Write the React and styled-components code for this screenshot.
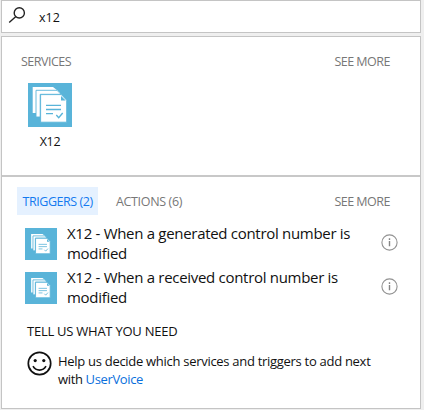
import React from "react";
import styled, { createGlobalStyle } from "styled-components";

const Global = createGlobalStyle`
  * { box-sizing: border-box; }
  body { margin: 0; background: #efefef; overflow: hidden; font-family: "Open Sans", "Noto Sans", sans-serif; color: #111; }
`;

const Picker = styled.main`
  display: flex;
  flex-direction: column;
  gap: 3px;
  width: 420px;
  height: 409px;
  margin-left: 1px;
`;

const SearchBar = styled.div`
  display: flex;
  align-items: flex-start;
  height: 33px;
  padding: 5px 0 0 6px;
  border: 1px solid #c4c4c4;
  background: #fff;
`;

const Label = styled.span`
  display: block;
  white-space: nowrap;
  font-size: ${(p) => p.$size || 12.5}px;
  line-height: ${(p) => p.$line || 18}px;
  letter-spacing: ${(p) => p.$track || 0}px;
  color: ${(p) => p.$color || "#111"};
`;

const Query = styled(Label)`
  margin: 3px 0 0 13px;
`;

const Panel = styled.div`
  height: 373px;
  border: 1px solid #c4c4c4;
  background: #fff;
`;

const Services = styled.section`
  height: 140px;
  border-bottom: 2px solid #c8c8c8;
  padding: 16px 30px 0 19px;
`;

const HeaderRow = styled.header`
  display: flex;
  justify-content: space-between;
  align-items: center;
`;

const ServiceTile = styled.div`
  display: flex;
  flex-direction: column;
  align-items: center;
  width: 44px;
  margin: 12px 0 0 7px;
  gap: 6px;
`;

const Operations = styled.section`
  padding: 10px 30px 0 15px;
`;

const Tabs = styled.div`
  display: flex;
`;

const Tab = styled.button`
  height: 28px;
  padding: 2px 0 0 ${(p) => (p.$active ? 5.5 : 18)}px;
  width: ${(p) => (p.$active ? 81 : 110)}px;
  border: 0;
  font-family: inherit;
  text-align: left;
  background: ${(p) => (p.$active ? "#e5f1ff" : "transparent")};
`;

const SeeMore = styled(Label)`
  padding-top: ${(p) => p.$drop || 0}px;
`;

const List = styled.div`
  display: flex;
  flex-direction: column;
  margin: 10px 0 0 8px;
`;

const Item = styled.div`
  display: flex;
  height: 44px;
`;

const ItemIcon = styled.div`
  width: 42px;
  padding-top: 3px;
`;

const ItemText = styled.div`
  flex: 1;
  margin-top: -2px;
`;

const InfoSlot = styled.div`
  width: 17px;
  margin: 9px -8px 0 0;
`;

const Feedback = styled.section`
  padding: 9px 0 0 25px;
`;

const FeedbackRow = styled.div`
  display: flex;
  margin-top: 11px;
  gap: 6px;
`;

const FeedbackText = styled.div`
  padding-top: 1px;
`;

const Link = styled.a`
  color: #0a6fdc;
`;

const Svg = styled.svg`
  display: block;
  flex: none;
`;

function Documents({ size, compact }) {
  const edge = compact ? 1.5 : 0.9;
  return (
    <Svg width={size} height={size} viewBox={`0 0 ${size} ${size}`}>
      <rect width={size} height={size} fill="#59b4d9" />
      <g transform={compact ? "translate(3.5 3.8) scale(.56)" : undefined}>
        <path d="M4.7 4H25l7 5.5V10H8v20H4.7z" fill="#fff" />
        <path d="M8 7.3h21l4 4H12.2V34H8z" fill="#fff" stroke="#59b4d9" strokeWidth={edge} />
        <path d="M12.6 11.6h20.7l5.4 5.6v22H12.6z" fill="#fff" stroke="#59b4d9" strokeWidth={edge} />
        <path d="M33 13v4.6h4.7z" fill="#59b4d9" />
        <path d="M18 22.4h15M18 26.5h15M18 30.6h7M28.3 32l2.4 2.6 4-4.6" fill="none" stroke="#59b4d9" strokeWidth="1.4" />
      </g>
    </Svg>
  );
}

function SearchIcon() {
  return (
    <Svg width="18" height="18" viewBox="0 0 18 18" fill="none" stroke="#222" strokeWidth="1.4">
      <circle cx="11.3" cy="6.9" r="5.1" />
      <path d="M7.6 10.7 1.2 16.5" />
    </Svg>
  );
}

function InfoIcon() {
  return (
    <Svg width="17" height="17" viewBox="0 0 17 17">
      <circle cx="8.5" cy="8.5" r="7.6" fill="none" stroke="#929292" strokeWidth="1.1" />
      <path d="M8.5 4.3v1.7M8.5 7v5.2" stroke="#858585" strokeWidth="1.4" />
    </Svg>
  );
}

function Smiley() {
  return (
    <Svg width="25" height="25" viewBox="0 0 25 25">
      <circle cx="12.5" cy="12.5" r="11.2" fill="none" stroke="#111" strokeWidth="1.7" />
      <circle cx="8.2" cy="9.6" r="1.6" fill="#111" />
      <circle cx="16.8" cy="9.6" r="1.6" fill="#111" />
      <path d="M6 15.2c3 5.2 10 5.2 13 0" fill="none" stroke="#111" strokeWidth="1.6" />
    </Svg>
  );
}

const triggers = [
  { title: "X12 - When a generated control number is", track: -0.3 },
  { title: "X12 - When a received control number is", track: -0.3 },
];

export default function App() {
  return (
    <>
      <Global />
      <Picker>
        <SearchBar>
          <SearchIcon />
          <Query>x12</Query>
        </SearchBar>
        <Panel>
          <Services>
            <HeaderRow>
              <Label $color="#777" $track={-0.5}>SERVICES</Label>
              <SeeMore $color="#777" $track={-0.5}>SEE MORE</SeeMore>
            </HeaderRow>
            <ServiceTile>
              <Documents size={44} />
              <Label $track={-0.3}>X12</Label>
            </ServiceTile>
          </Services>
          <Operations>
            <HeaderRow>
              <Tabs>
                <Tab $active><Label $color="#147aef" $track={-0.45}>TRIGGERS (2)</Label></Tab>
                <Tab><Label $color="#777" $track={-0.35}>ACTIONS (6)</Label></Tab>
              </Tabs>
              <SeeMore $color="#777" $track={-0.5} $drop={2}>SEE MORE</SeeMore>
            </HeaderRow>
            <List>
              {triggers.map((t) => (
                <Item key={t.title}>
                  <ItemIcon><Documents size={32} compact /></ItemIcon>
                  <ItemText>
                    <Label $size={15} $line={20} $track={t.track}>{t.title}</Label>
                    <Label $size={15} $line={20} $track={t.track}>modified</Label>
                  </ItemText>
                  <InfoSlot><InfoIcon /></InfoSlot>
                </Item>
              ))}
            </List>
          </Operations>
          <Feedback>
            <Label $size={13} $track={-0.25}>TELL US WHAT YOU NEED</Label>
            <FeedbackRow>
              <Smiley />
              <FeedbackText>
                <Label $size={13} $track={-0.29}>Help us decide which services and triggers to add next</Label>
                <Label $size={13} $track={-0.36}>with <Link>UserVoice</Link></Label>
              </FeedbackText>
            </FeedbackRow>
          </Feedback>
        </Panel>
      </Picker>
    </>
  );
}
